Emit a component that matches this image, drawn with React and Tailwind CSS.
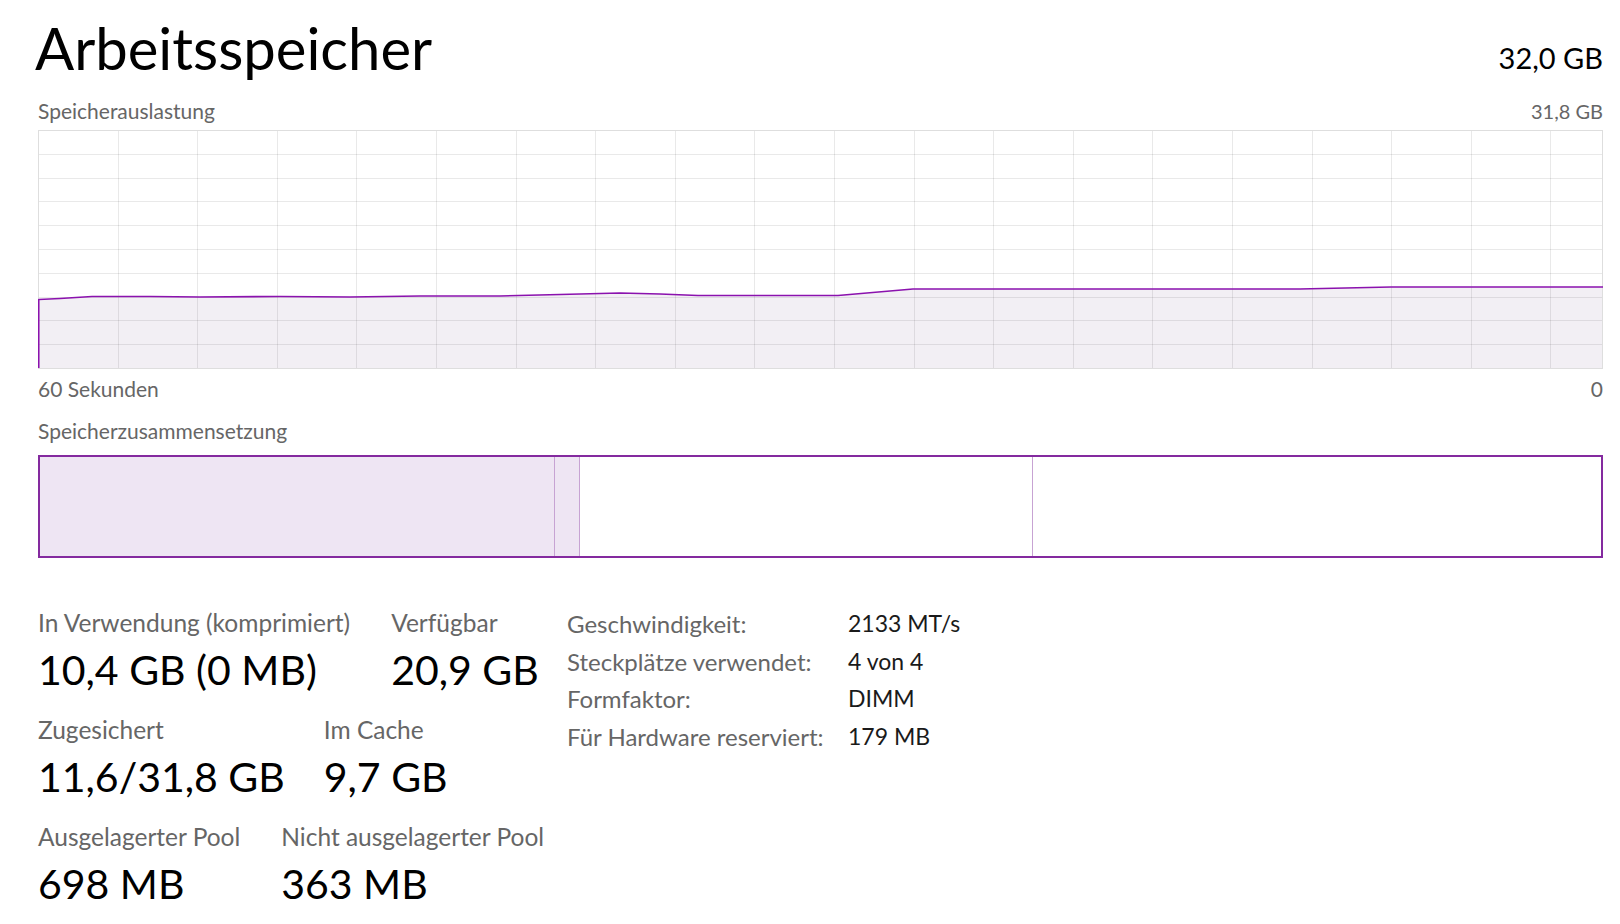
import React from "react";

const W = 1565;
const H = 239;
const data = [
  [0, 169.5], [22, 168.5], [54, 166.5], [112, 166.5], [162, 167], [242, 166.5], [312, 167], [382, 166],
  [462, 166], [522, 164.5], [582, 163], [622, 164], [660, 165.5], [800, 165.5],
  [875, 159], [1262, 159], [1273, 158.8], [1353, 157], [1565, 157],
];

function Graph() {
  const cols = [];
  for (let k = 1; k * 79.6 < W; k++) cols.push(Math.round(k * 79.6) + 0.5);
  const rows = [];
  for (let k = 1; k < 10; k++) rows.push(Math.round(k * 23.8) + 0.5);
  const line = data.map(([x, y]) => `${x},${y}`).join(" ");
  const fill = `${line} ${W},${H} 0,${H}`;
  const stroke = `0.75,${H - 1} 0.75,${data[0][1]} ${data.slice(1).map(([x, y]) => `${x},${y}`).join(" ")}`;
  return (
    <div className="h-[239px] w-full">
      <svg width="100%" height="100%" viewBox={`0 0 ${W} ${H}`} preserveAspectRatio="none" className="block">
        <polygon points={fill} fill="#f2eff4" />
        {cols.map((x) => (
          <line key={"c" + x} x1={x} y1={0} x2={x} y2={H} stroke="rgba(0,0,0,0.085)" strokeWidth="1" />
        ))}
        {rows.map((y) => (
          <line key={"r" + y} x1={0} y1={y} x2={W} y2={y} stroke="rgba(0,0,0,0.085)" strokeWidth="1" />
        ))}
        <rect x="0.5" y="0.5" width={W - 1} height={H - 1} fill="none" stroke="#dedede" strokeWidth="1" />
        <polyline points={stroke} fill="none" stroke="#8b12ae" strokeWidth="1.6" strokeLinejoin="round" />
      </svg>
    </div>
  );
}

function Stat({ label, value }) {
  return (
    <div className="flex flex-col">
      <div className="text-[24.5px] leading-[24px] text-[#666666] whitespace-nowrap">{label}</div>
      <div className="text-[41px] leading-[70px] text-black whitespace-nowrap">{value}</div>
    </div>
  );
}

export default function App() {
  return (
    <div
      className="w-[1620px] h-[924px] bg-white overflow-hidden pl-[38px] pr-[17px]"
      style={{ fontFamily: '"Lato", "Liberation Sans", sans-serif' }}
    >
      <div className="flex justify-between items-start h-[95px]">
        <div className="text-[58px] leading-[95px] text-black -ml-[3px]">Arbeitsspeicher</div>
        <div className="text-[29px] leading-[40px] mt-[38px] text-black">32,0 GB</div>
      </div>
      <div className="flex justify-between items-baseline text-[21px] leading-[32px] text-[#666666]">
        <span>Speicherauslastung</span>
        <span className="text-[20px]">31,8 GB</span>
      </div>
      <div className="mt-[3px]">
        <Graph />
      </div>
      <div className="flex justify-between text-[21px] leading-[40px] text-[#666666]">
        <span>60 Sekunden</span>
        <span>0</span>
      </div>
      <div className="text-[21px] leading-[44px] text-[#666666]">Speicherzusammensetzung</div>
      <div className="mt-[2px] h-[103px] border-2 border-[#842a9f] flex">
        <div className="w-[514px] bg-[#eee5f3]" />
        <div className="w-px bg-[#c7a3d3]" />
        <div className="w-[24px] bg-[#eee5f3]" />
        <div className="w-px bg-[#c7a3d3]" />
        <div className="w-[452px] bg-white" />
        <div className="w-px bg-[#c7a3d3]" />
        <div className="flex-1 bg-white" />
      </div>
      <div className="mt-[47px] flex items-start">
        <div className="w-[529px] pt-[6px] flex flex-col gap-[13px]">
          <div className="flex gap-[41px]">
            <Stat label="In Verwendung (komprimiert)" value="10,4 GB (0 MB)" />
            <Stat label="Verfügbar" value="20,9 GB" />
          </div>
          <div className="flex gap-[39px]">
            <Stat label="Zugesichert" value="11,6/31,8 GB" />
            <Stat label="Im Cache" value="9,7 GB" />
          </div>
          <div className="flex gap-[41px]">
            <Stat label="Ausgelagerter Pool" value="698 MB" />
            <Stat label="Nicht ausgelagerter Pool" value="363 MB" />
          </div>
        </div>
        <div className="grid grid-cols-[281px_auto] leading-[37.5px]">
          <div className="text-[24px] text-[#666666]">Geschwindigkeit:</div>
          <div className="text-[23px] text-[#1a1a1a]">2133 MT/s</div>
          <div className="text-[24px] text-[#666666]">Steckplätze verwendet:</div>
          <div className="text-[23px] text-[#1a1a1a]">4 von 4</div>
          <div className="text-[24px] text-[#666666]">Formfaktor:</div>
          <div className="text-[23px] text-[#1a1a1a]">DIMM</div>
          <div className="text-[24px] text-[#666666]">Für Hardware reserviert:</div>
          <div className="text-[23px] text-[#1a1a1a]">179 MB</div>
        </div>
      </div>
    </div>
  );
}
